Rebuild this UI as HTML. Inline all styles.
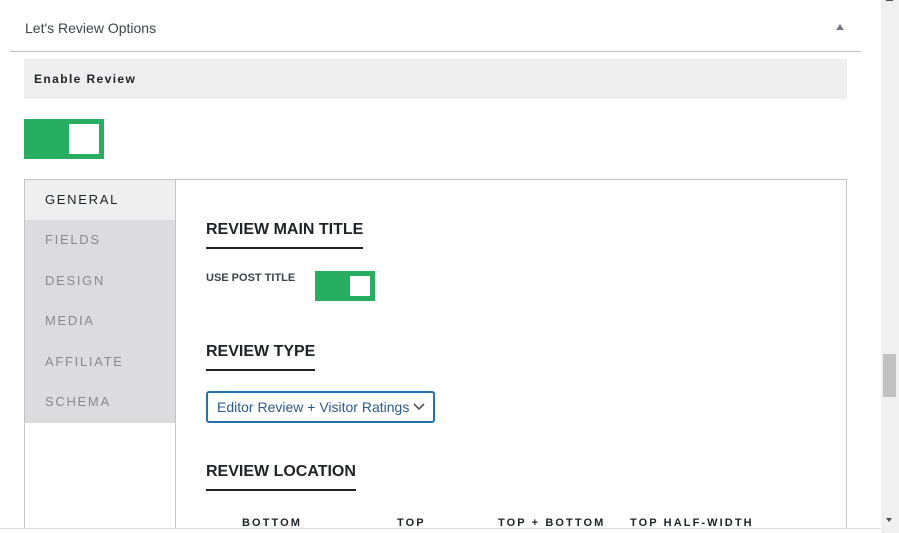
<!DOCTYPE html>
<html><head><style>
*{margin:0;padding:0;box-sizing:border-box}
html,body{width:899px;height:533px;overflow:hidden}
body{background:#fff;font-family:"Liberation Sans",sans-serif;position:relative}
.a{position:absolute}
.tab{position:absolute;left:0;width:150px;height:40px;line-height:40px;padding-left:20px;font-size:13px;letter-spacing:1.7px;color:#8a8a8a;background:#dcdcde}
h3{position:absolute;font-size:16px;font-weight:bold;color:#1d2327;padding-bottom:8px;border-bottom:2px solid #1d2327}
.loc{position:absolute;top:517px;font-size:11px;font-weight:bold;letter-spacing:2.1px;color:#1d2327}
</style></head><body>
<div class="a" style="left:25px;top:20px;font-size:14px;color:#3c434a">Let's Review Options</div>
<div class="a" style="left:836px;top:24px;width:0;height:0;border-left:4px solid transparent;border-right:4px solid transparent;border-bottom:6px solid #787c82"></div>
<div class="a" style="left:10px;top:51px;width:851px;height:1px;background:#c3c4c7"></div>
<div class="a" style="left:24px;top:59px;width:823px;height:40px;background:#eeeeee"></div>
<div class="a" style="left:34px;top:72px;font-size:12px;font-weight:bold;letter-spacing:1.4px;color:#1d2327">Enable Review</div>
<div class="a" style="left:24px;top:119px;width:80px;height:40px;background:#27ae60"></div>
<div class="a" style="left:69px;top:124px;width:30px;height:30px;background:#fff"></div>
<div class="a" style="left:24px;top:179px;width:823px;height:360px;border:1px solid #c3c4c7"></div>
<div class="a" style="left:25px;top:180px;width:151px;height:243px;background:#dcdcde;border-right:1px solid #c3c4c7"></div>
<div class="a" style="left:175px;top:180px;width:1px;height:353px;background:#c3c4c7"></div>
<div class="a" style="left:25px;top:180px;width:150px">
<div class="tab" style="top:0;background:#efefef;color:#1d2327">GENERAL</div>
<div class="tab" style="top:40px">FIELDS</div>
<div class="tab" style="top:81px">DESIGN</div>
<div class="tab" style="top:121px">MEDIA</div>
<div class="tab" style="top:162px">AFFILIATE</div>
<div class="tab" style="top:202px">SCHEMA</div>
</div>
<h3 style="left:206px;top:221px">REVIEW MAIN TITLE</h3>
<div class="a" style="left:206px;top:272px;font-size:11px;font-weight:bold;color:#3c434a">USE POST TITLE</div>
<div class="a" style="left:315px;top:271px;width:60px;height:30px;background:#27ae60"></div>
<div class="a" style="left:350px;top:276px;width:20px;height:20px;background:#fff"></div>
<h3 style="left:206px;top:343px">REVIEW TYPE</h3>
<div class="a" style="left:206px;top:391px;width:229px;height:32px;border:2px solid #2271b1;border-radius:3px;font-size:14px;color:#2c5a8a;padding:6px 0 0 9px;white-space:nowrap">Editor Review + Visitor Ratings</div>
<svg class="a" style="left:413px;top:403px" width="12" height="8"><path d="M1 1l5 5 5-5" fill="none" stroke="#50575e" stroke-width="1.6"/></svg>
<h3 style="left:206px;top:463px">REVIEW LOCATION</h3>
<div class="loc" style="left:242px">BOTTOM</div>
<div class="loc" style="left:397px">TOP</div>
<div class="loc" style="left:498px">TOP + BOTTOM</div>
<div class="loc" style="left:630px">TOP HALF-WIDTH</div>
<div class="a" style="left:0;top:528px;width:881px;height:5px;background:#fff;border-top:1px solid #dcdcde"></div>
<div class="a" style="left:881px;top:0;width:18px;height:533px;background:#f0f0f0"></div>
<div class="a" style="left:883px;top:354px;width:13px;height:43px;background:#c1c1c1"></div>
<div class="a" style="left:886px;top:518px;width:0;height:0;border-left:3px solid transparent;border-right:3px solid transparent;border-top:4px solid #505050"></div>
<div class="a" style="left:886px;top:0;width:7px;height:1px;background:#505050"></div>
</body></html>
